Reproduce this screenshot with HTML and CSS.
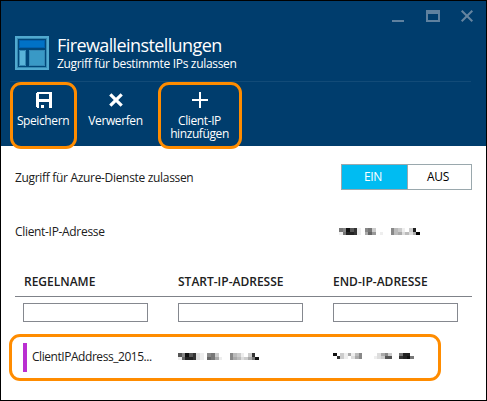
FILE: index.html
```html
<!DOCTYPE html>
<html lang="de">
<head>
<meta charset="utf-8">
<title>Firewalleinstellungen</title>
<link rel="stylesheet" href="styles.css">
</head>
<body>
<main class="blade">
  <header class="header">
    <div class="window-controls">
      <svg width="86" height="14" viewBox="0 0 86 14" shape-rendering="crispEdges">
        <path class="control" d="M0 11h12v2H0zM34 1h14v12H34zM36 5v6h10V5z" fill-rule="evenodd"/>
        <path class="control-line" shape-rendering="auto" d="M69.7 1.7l10.6 10.6M80.3 1.7L69.7 12.3"/>
      </svg>
    </div>
    <div class="heading">
      <svg class="logo" width="34" height="34" viewBox="0 0 34 34">
        <path fill="#50a9cf" d="M0 0h34v34H0z"/>
        <path fill="#3489b3" d="M2 2h30v30H2z"/>
        <path fill="#00477a" d="M3 3h28v28H3z"/>
        <path fill="#0061b0" d="M4 4h26v8H4z"/>
        <path fill="#0072c6" d="M5 5h24v6H5z"/>
        <path fill="#59b4d9" d="M4 14h7v16H4z"/>
        <path fill="#3999c6" d="M14 14h16v16H14z"/>
        <path fill="none" stroke="#3487b4" d="M4.5 14.5h6v15h-6zM14.5 14.5h15v15h-15z"/>
      </svg>
      <div class="titles">
        <h1>Firewalleinstellungen</h1>
        <p>Zugriff für bestimmte IPs zulassen</p>
      </div>
    </div>
    <nav class="toolbar">
      <div class="command save marked">
        <svg width="16" height="16" viewBox="0 0 16 16" shape-rendering="crispEdges"><path fill="#fff" fill-rule="evenodd" d="M1 0h14l1 1v15H1l-1-1V1zM3 2v5h10V2zM3 10v6h2v-3h3v3h5v-6z"/></svg>
        <span>Speichern</span>
      </div>
      <div class="command discard">
        <svg width="16" height="16" viewBox="0 0 16 16"><path fill="none" stroke="#fff" stroke-width="3.2" d="M2.3 2.3l11.4 11.4M13.7 2.3L2.3 13.7"/></svg>
        <span>Verwerfen</span>
      </div>
      <div class="command add marked">
        <svg width="16" height="16" viewBox="0 0 16 16" shape-rendering="crispEdges"><path fill="#fff" d="M7 0h2v7h7v2H9v7H7V9H0V7h7z"/></svg>
        <span>Client-IP</span>
        <span>hinzufügen</span>
      </div>
    </nav>
  </header>
  <section class="content">
    <div class="setting access">
      <span class="access-label">Zugriff für Azure-Dienste zulassen</span>
      <div class="toggle"><span class="on">EIN</span><span class="off">AUS</span></div>
    </div>
    <div class="setting client">
      <span class="client-label">Client-IP-Adresse</span>
      <svg class="masked" width="81" height="7" viewBox="0 0 22 2" preserveAspectRatio="none" data-top="78153ef87cffff8bcefc2f" data-bottom="e7223efa69feff8badbda0"></svg>
    </div>
    <div class="columns table-head"><span>REGELNAME</span><span class="shifted">START-IP-ADRESSE</span><span class="shifted">END-IP-ADRESSE</span></div>
    <div class="columns filters"><input aria-label="Regelname"><input aria-label="Start-IP-Adresse"><input aria-label="End-IP-Adresse"></div>
    <div class="rule marked">
      <div class="rule-name"><span>ClientIPAddress_2015...</span></div>
      <svg class="masked" width="81" height="7" viewBox="0 0 22 2" preserveAspectRatio="none" data-top="58153def87cfff8bcefc3f" data-bottom="e6223def67aeff8abdca71"></svg>
      <svg class="masked" width="81" height="6" viewBox="0 0 22 2" preserveAspectRatio="none" data-top="1fceaeb8ffffda8cff722f" data-bottom="f3cefda8fffedc55ff3217"></svg>
    </div>
  </section>
</main>
<script src="mask.js"></script>
</body>
</html>
```
FILE: styles.css
```css
* { box-sizing: border-box; }
body { margin: 0; font: 12px/16px "Open Sans", "Noto Sans", sans-serif; color: #202020; background: #fff; }
.blade { width: 487px; height: 401px; border: 1px solid #000; overflow: hidden; }
.header { height: 145px; background: #003d6d; color: #fff; }
.window-controls { height: 35px; padding: 8px 0 0 391px; }
.window-controls svg { display: block; }
.control { fill: #5f819f; }
.control-line { fill: none; stroke: #6685a0; stroke-width: 2; }
.heading { display: flex; height: 45px; padding-left: 14px; gap: 8px; }
h1, p { margin: 0; font-weight: 400; white-space: nowrap; }
h1 { font-size: 18px; line-height: 18px; letter-spacing: -.6px; }
p { line-height: 20px; letter-spacing: -.32px; }
.toolbar { display: flex; height: 67px; border-top: 1px solid #124b78; margin: 0 15px 0 9px; }
.marked { border: 3px solid #ff8c00; border-radius: 11px; }
.command { display: flex; flex-direction: column; align-items: center; height: 67px; padding-top: 7px; line-height: 13px; white-space: nowrap; letter-spacing: -.4px; }
.command svg { margin-bottom: 6px; flex: none; }
.command span { margin-right: 1px; }
.save { width: 67px; }
.discard { width: 81px; padding: 10px 3px 0 0; }
.add { width: 84px; }
.content { height: 254px; }
.setting { display: flex; justify-content: space-between; padding-left: 14px; letter-spacing: -.32px; }
.access { height: 67px; padding-top: 18px; padding-right: 14px; }
.access-label { padding-top: 6px; }
.toggle { display: flex; width: 131px; height: 26px; border: 1px solid #9aa8ad; line-height: 24px; text-align: center; color: #000; }
.on { width: 66px; padding-right: 3px; background: #00bcf2; color: #fff; border-right: 1px solid #9aa8ad; }
.off { flex: 1; padding-right: 3px; }
.client { height: 50px; padding-top: 11px; padding-right: 66px; }
.client .masked { margin-top: 4px; }
.masked { display: block; flex: none; }
.columns { display: grid; grid-template-columns: 125px 125px 125px; column-gap: 30px; }
.table-head { height: 34px; margin: 0 14px; padding: 11px 0 0 9px; border-bottom: 1px solid #7f8289; font-weight: 600; white-space: nowrap; }
.shifted { margin-left: -1px; }
.filters { padding: 6px 0 0 22px; }
input { width: 125px; height: 19px; padding: 0; border: 1px solid #85888f; background: #fff; }
.rule { display: flex; width: 432px; height: 47px; margin: 12px 0 0 8px; padding: 6px 0 0 11px; letter-spacing: -.45px; }
.rule-name { width: 155px; height: 29px; padding-left: 5px; border-left: 4px solid #ba2fd1; line-height: 27px; }
.rule .masked { margin: 10px 74px 0 0; }
.rule .masked:last-child { margin-right: 0; }
```
FILE: mask.js
```js
// Fills each masked address with two rows of grey blocks, one hex digit per block.
document.querySelectorAll(".masked").forEach(function (svg) {
  [svg.dataset.top, svg.dataset.bottom].forEach(function (row, y) {
    row.split("").forEach(function (shade, x) {
      if (shade === "f") return;
      var block = document.createElementNS("http://www.w3.org/2000/svg", "rect");
      block.setAttribute("x", x);
      block.setAttribute("y", y);
      block.setAttribute("width", 1);
      block.setAttribute("height", 1);
      block.setAttribute("fill", "#" + shade + shade + shade);
      block.setAttribute("shape-rendering", "crispEdges");
      svg.appendChild(block);
    });
  });
});
```
